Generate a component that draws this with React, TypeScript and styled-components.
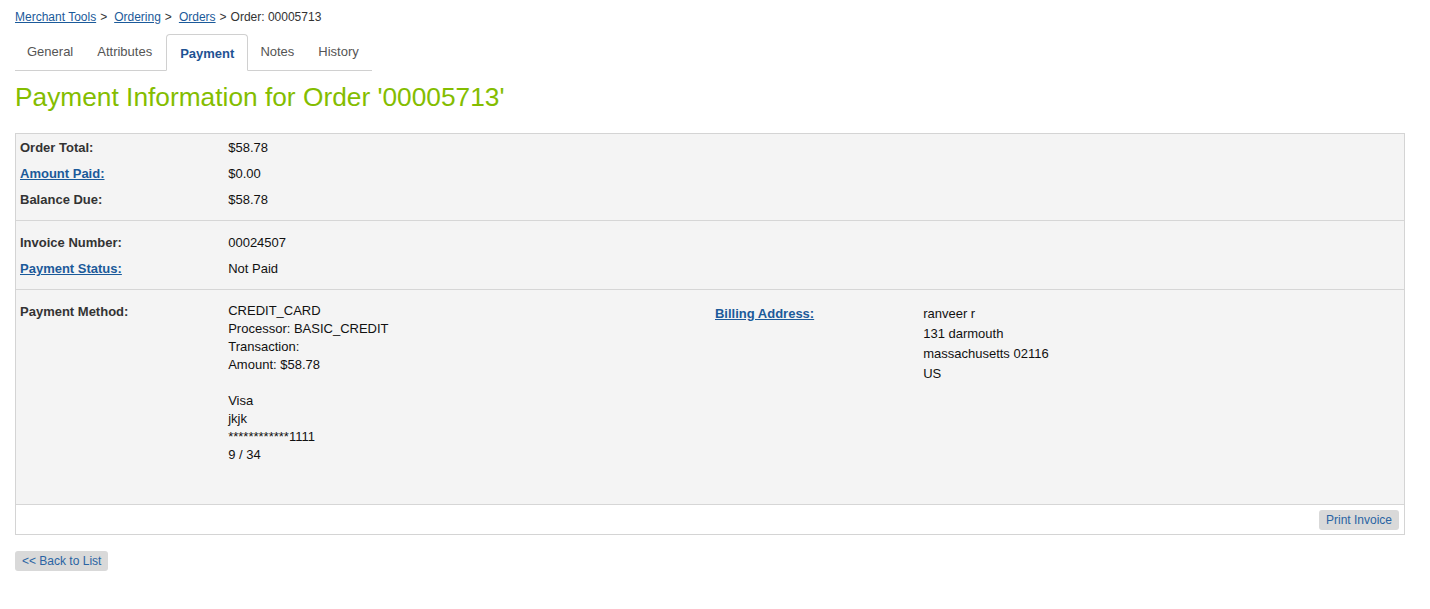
import React from "react";
import styled, { createGlobalStyle } from "styled-components";

const Global = createGlobalStyle`
  html, body { margin: 0; padding: 0; background: #fff; }
  body { font-family: "Liberation Sans", Arial, Helvetica, sans-serif; color: #333; }
`;

const Page = styled.div`
  padding: 9px 25px 30px 15px;
  box-sizing: border-box;
  width: 1430px;
`;

const Breadcrumb = styled.div`
  font-size: 12px;
  line-height: 16px;
  color: #333;
`;

const Link = styled.a<{ $bold?: boolean }>`
  color: #1b5a9a;
  text-decoration: underline;
  cursor: pointer;
  font-weight: ${(p) => (p.$bold ? "bold" : "normal")};
`;

const Sep = styled.span<{ $after?: number }>`
  margin: 0 ${(p) => p.$after ?? 7}px 0 4px;
`;

const Tabs = styled.div`
  margin-top: 9px;
  display: flex;
  width: 357px;
  border-bottom: 1px solid #d0d0d0;
  height: 36px;
`;

const Tab = styled.div<{ $active?: boolean; $pr?: number }>`
  box-sizing: border-box;
  height: 37px;
  margin-bottom: -1px;
  padding: ${(p) => (p.$active ? "2px 13px 0" : `0 ${p.$pr ?? 11}px 2px 11px`)};
  display: flex;
  align-items: center;
  font-size: 13px;
  border: 1px solid ${(p) => (p.$active ? "#d0d0d0" : "transparent")};
  border-bottom: 1px solid ${(p) => (p.$active ? "#fff" : "transparent")};
  border-radius: 4px 4px 0 0;
  background: ${(p) => (p.$active ? "#fff" : "transparent")};
  color: ${(p) => (p.$active ? "#1f5393" : "#555")};
  font-weight: ${(p) => (p.$active ? "bold" : "normal")};
`;

const Title = styled.h1`
  margin: 11px 0 0;
  font-size: 26.3px;
  line-height: 30px;
  font-weight: normal;
  color: #84bd00;
`;

const Box = styled.div`
  margin-top: 21px;
  border: 1px solid #d4d4d4;
  width: 1390px;
  box-sizing: border-box;
`;

const Section = styled.div<{ $pt: number; $pb: number }>`
  background: #f4f4f4;
  display: grid;
  grid-template-columns: 15% 35% 15% 35%;
  padding: ${(p) => p.$pt}px 0 ${(p) => p.$pb}px;
  border-bottom: 1px solid #d6d6d6;
  font-size: 13px;
`;

const Label = styled.div<{ $lh?: number; $pt?: number }>`
  padding: ${(p) => p.$pt ?? 0}px 4px 0;
  line-height: ${(p) => p.$lh ?? 26}px;
  font-weight: bold;
  color: #333;
  grid-column: 1;
`;

const Label2 = styled(Label)`
  grid-column: 3;
  padding-left: 5px;
`;

const Value = styled.div<{ $lh?: number; $pt?: number }>`
  padding: ${(p) => p.$pt ?? 0}px 4px 0;
  line-height: ${(p) => p.$lh ?? 26}px;
  color: #111;
  grid-column: 2;
`;

const Value2 = styled(Value)`
  grid-column: 4;
  padding-left: 5px;
`;

const Line = styled.div``;

const Footer = styled.div`
  display: flex;
  justify-content: flex-end;
  padding: 5px 5px 4px;
  background: #fff;
`;

const Button = styled.button`
  font-family: "Liberation Sans", Arial, Helvetica, sans-serif;
  font-size: 12px;
  height: 20px;
  line-height: 20px;
  padding: 0 7px;
  border: none;
  border-radius: 3px;
  background: #d9d9d9;
  color: #2a64a3;
  cursor: pointer;
`;

const BackRow = styled.div`
  margin-top: 16px;
`;

const methodLines = [
  "CREDIT_CARD",
  "Processor: BASIC_CREDIT",
  "Transaction:",
  "Amount: $58.78",
  "\u00a0",
  "Visa",
  "jkjk",
  "************1111",
  "9 / 34",
];

const addressLines = ["ranveer r", "131 darmouth", "massachusetts 02116", "US"];

export default function App() {
  return (
    <>
      <Global />
      <Page>
        <Breadcrumb>
          <Link>Merchant Tools</Link>
          <Sep>&gt;</Sep>
          <Link>Ordering</Link>
          <Sep>&gt;</Sep>
          <Link>Orders</Link>
          <Sep $after={4}>&gt;</Sep>Order: 00005713
        </Breadcrumb>
        <Tabs>
          <Tab>General</Tab>
          <Tab $pr={13}>Attributes</Tab>
          <Tab $active>Payment</Tab>
          <Tab>Notes</Tab>
          <Tab>History</Tab>
        </Tabs>
        <Title>Payment Information for Order '00005713'</Title>
        <Box>
          <Section $pt={1} $pb={7}>
            <Label>Order Total:</Label>
            <Value>$58.78</Value>
            <Label>
              <Link $bold>Amount Paid:</Link>
            </Label>
            <Value>$0.00</Value>
            <Label>Balance Due:</Label>
            <Value>$58.78</Value>
          </Section>
          <Section $pt={9} $pb={7}>
            <Label>Invoice Number:</Label>
            <Value>00024507</Value>
            <Label>
              <Link $bold>Payment Status:</Link>
            </Label>
            <Value>Not Paid</Value>
          </Section>
          <Section $pt={12} $pb={40}>
            <Label $lh={18} $pt={1}>Payment Method:</Label>
            <Value $lh={18}>
              {methodLines.map((l, i) => (
                <Line key={i}>{l}</Line>
              ))}
            </Value>
            <Label2 $lh={20} $pt={2}>
              <Link $bold>Billing Address:</Link>
            </Label2>
            <Value2 $lh={20} $pt={2}>
              {addressLines.map((l, i) => (
                <Line key={i}>{l}</Line>
              ))}
            </Value2>
          </Section>
          <Footer>
            <Button>Print Invoice</Button>
          </Footer>
        </Box>
        <BackRow>
          <Button>&lt;&lt; Back to List</Button>
        </BackRow>
      </Page>
    </>
  );
}
